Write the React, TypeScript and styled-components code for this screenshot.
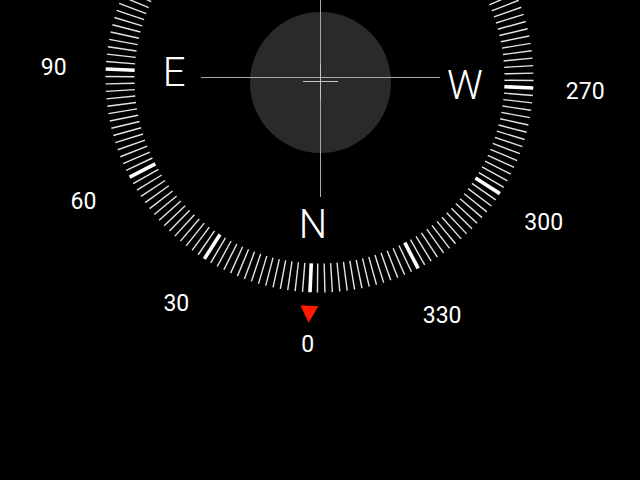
import React from "react";
import styled, { createGlobalStyle } from "styled-components";

const GlobalStyle = createGlobalStyle`
  html, body { margin: 0; padding: 0; background: #000; }
  #root { width: 640px; height: 480px; }
`;

const CX = 319.5;
const CY = 78.5;
const PHI = 2.55;

const Screen = styled.div`
  position: relative;
  width: 640px;
  height: 480px;
  overflow: hidden;
  background: #000;
`;

const DialSvg = styled.svg`
  display: block;
  width: 640px;
  height: 480px;
`;

const Tick = styled.line<{ $major: boolean }>`
  stroke: ${(p) => (p.$major ? "#ffffff" : "#e4e4e4")};
  stroke-width: ${(p) => (p.$major ? 3.6 : 1.4)};
`;

const Cardinal = styled.text`
  font-family: Roboto, "Liberation Sans", sans-serif;
  font-weight: 300;
  font-size: 40px;
  fill: #ffffff;
`;

const Degree = styled.text`
  font-family: Roboto, "Liberation Sans", sans-serif;
  font-weight: 400;
  font-size: 23px;
  fill: #ffffff;
`;

const Pointer = styled.polygon`
  fill: #ff1a00;
`;

/* Level reticle that lies over the dial, centred on the compass hub */
const Reticle = styled.div`
  position: absolute;
  left: 201px;
  top: -42px;
  width: 239px;
  height: 239px;
  display: grid;
  place-items: center;
  pointer-events: none;
  & > * {
    grid-area: 1 / 1;
  }
`;

const Bubble = styled.div`
  width: 141px;
  height: 141px;
  margin-top: 9px;
  border-radius: 50%;
  background: #2a2a2a;
`;

const Hair = styled.div<{ $vertical?: boolean; $len: number; $tone: string }>`
  width: ${(p) => (p.$vertical ? 1 : p.$len)}px;
  height: ${(p) => (p.$vertical ? p.$len : 1)}px;
  background: ${(p) => p.$tone};
`;

const SmallCross = styled.div`
  width: 35px;
  height: 35px;
  margin-top: 8px;
  display: grid;
  place-items: center;
  & > * {
    grid-area: 1 / 1;
  }
`;

const rad = (d: number) => ((d + PHI) * Math.PI) / 180;
const pos = (d: number, r: number) => ({
  x: CX - r * Math.sin(rad(d)),
  y: CY + r * Math.cos(rad(d)),
});

const ticks = Array.from({ length: 180 }, (_, i) => i * 2);
const degrees = Array.from({ length: 12 }, (_, i) => i * 30).filter(
  (d) => pos(d, 266).y > 20
);
const cardinals: [string, number][] = (
  [
    ["N", 0],
    ["E", 90],
    ["S", 180],
    ["W", 270],
  ] as [string, number][]
).filter(([, d]) => pos(d, 145.5).y > 20);

export default function App() {
  return (
    <>
      <GlobalStyle />
      <Screen>
        <DialSvg viewBox="0 0 640 480">
          {ticks.map((d) => (
            <Tick
              key={d}
              $major={d % 30 === 0}
              x1={CX}
              y1={CY + 185}
              x2={CX}
              y2={CY + 214}
              transform={`rotate(${d + PHI} ${CX} ${CY})`}
            />
          ))}
          <Pointer
            points={`${CX - 9},${CY + 227.5} ${CX + 9},${CY + 227.5} ${CX},${CY + 244.5}`}
            transform={`rotate(${PHI} ${CX} ${CY})`}
          />
          {degrees.map((d) => {
            const p = pos(d, 266);
            return (
              <Degree key={d} x={p.x} y={p.y + 8.2} textAnchor="middle">
                {d}
              </Degree>
            );
          })}
          {cardinals.map(([l, d]) => {
            const p = pos(d, 145.5);
            return (
              <Cardinal key={l} x={p.x} y={p.y + 14.2} textAnchor="middle">
                {l}
              </Cardinal>
            );
          })}
        </DialSvg>
        <Reticle>
          <Bubble />
          <Hair $len={239} $tone="#a8a8a8" />
          <Hair $vertical $len={239} $tone="#a8a8a8" />
          <SmallCross>
            <Hair $len={35} $tone="#c4c4c4" />
            <Hair $vertical $len={35} $tone="#c4c4c4" />
          </SmallCross>
        </Reticle>
      </Screen>
    </>
  );
}
